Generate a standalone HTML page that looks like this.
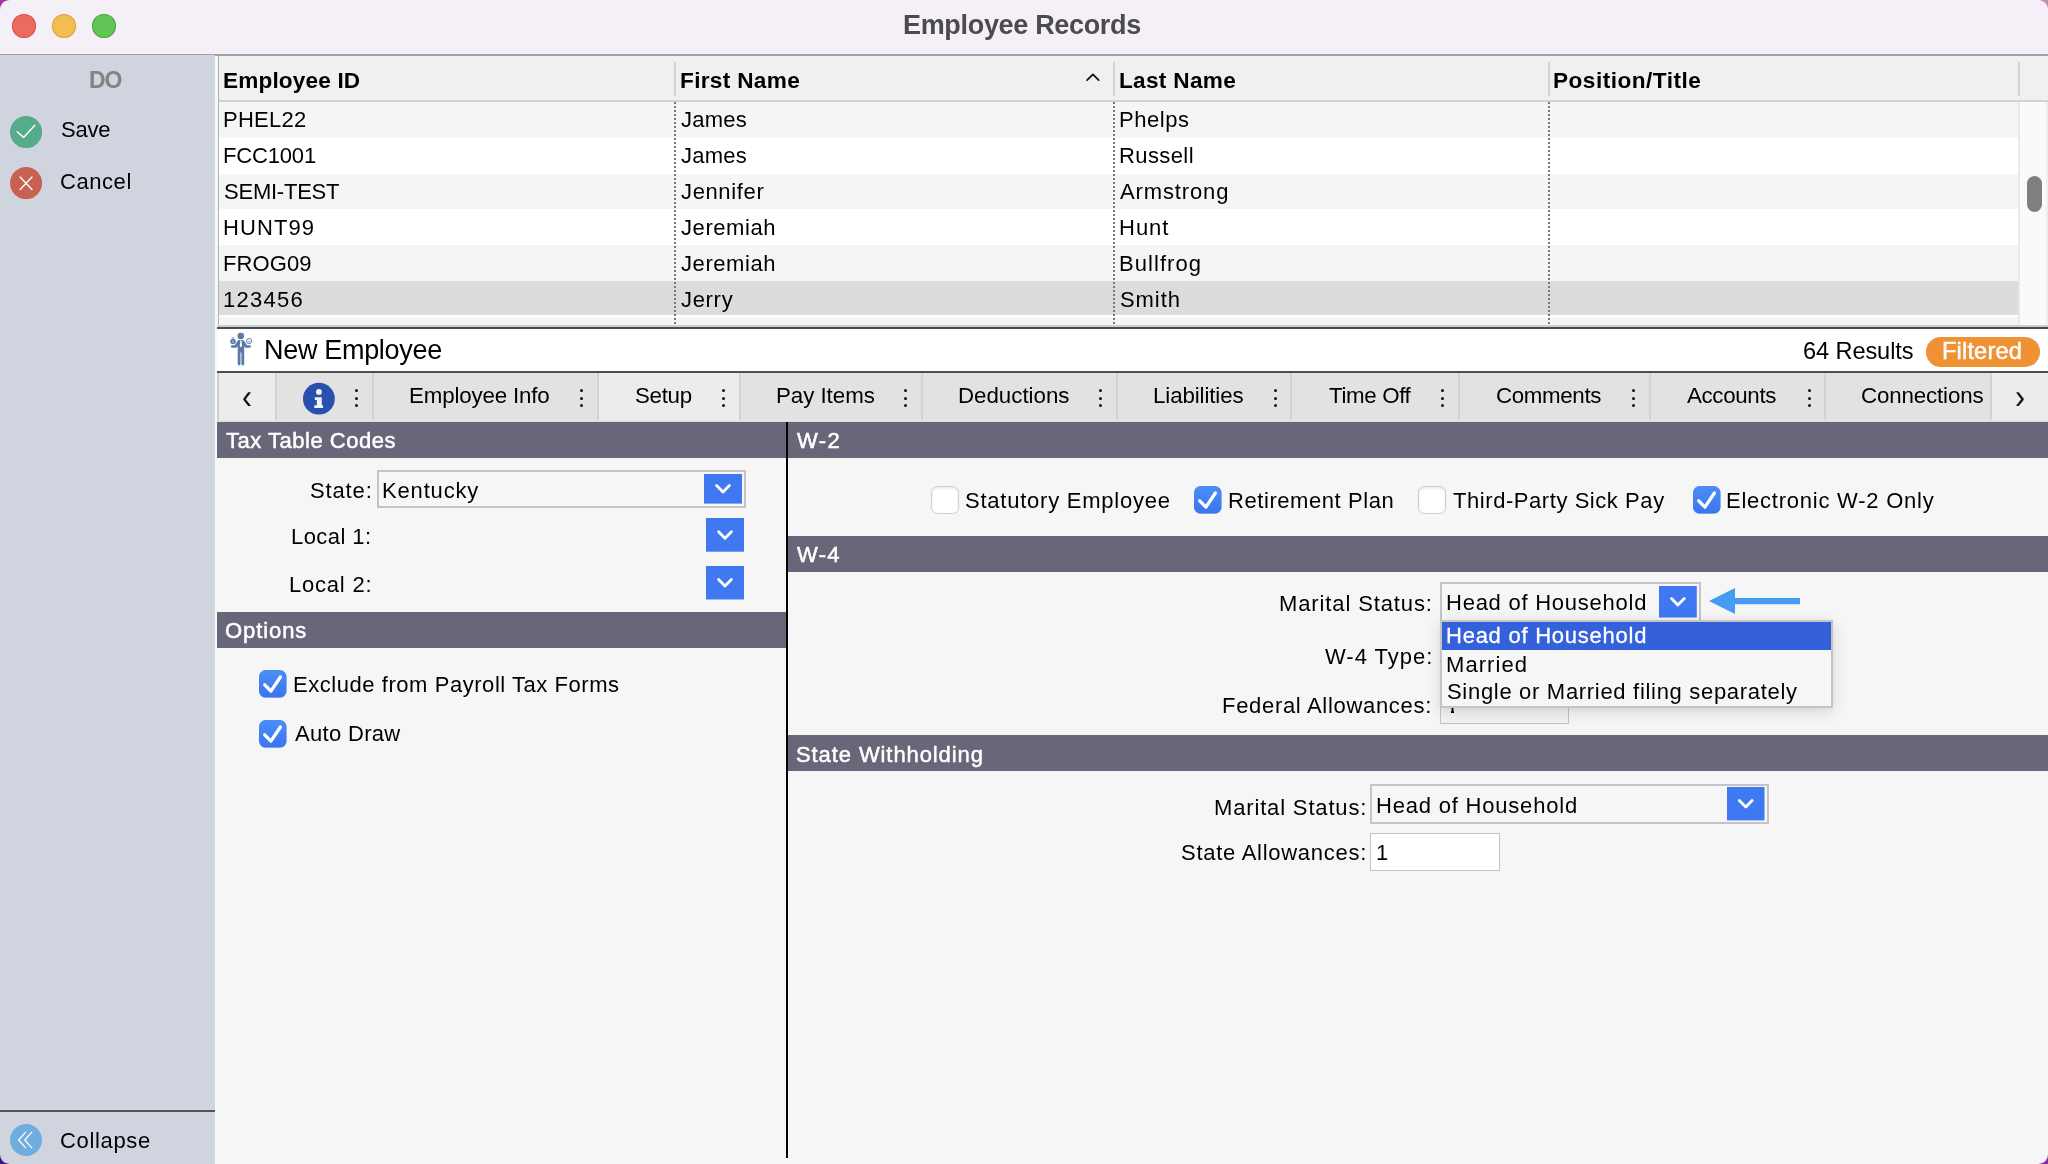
<!DOCTYPE html>
<html lang="en"><head><meta charset="utf-8"><title>Employee Records</title>
<style>
html,body{margin:0;padding:0;}
body{width:2048px;height:1164px;overflow:hidden;position:relative;background:#f6f6f6;font-family:"Liberation Sans",sans-serif;color:#000;}
.t{position:absolute;white-space:nowrap;line-height:1;will-change:transform;}
</style></head>
<body>
<div style="position:absolute;left:0px;top:0px;width:2048px;height:54px;background:#f5f0f7;"></div>
<div style="position:absolute;left:0px;top:54px;width:2048px;height:2px;background:#a1a1a3;"></div>
<div style="position:absolute;left:12px;top:13.8px;width:24px;height:24px;border-radius:50%;background:#ec6a5e;box-shadow:inset 0 0 0 1px #d8544a;"></div>
<div style="position:absolute;left:52px;top:13.8px;width:24px;height:24px;border-radius:50%;background:#f4be4f;box-shadow:inset 0 0 0 1px #dea33a;"></div>
<div style="position:absolute;left:92px;top:13.8px;width:24px;height:24px;border-radius:50%;background:#61c454;box-shadow:inset 0 0 0 1px #4eaa41;"></div>
<div class="t" style="left:902.89px;top:12px;font-size:27px;font-weight:bold;color:#4b4b4b;letter-spacing:-0.325px;">Employee Records</div>
<div style="position:absolute;left:0px;top:55px;width:214.9px;height:1109px;background:#d0d4de;"></div>
<div style="position:absolute;left:214.9px;top:56px;width:2.6px;height:1108px;background:#f8f8f9;"></div>
<div class="t" style="left:88.56px;top:69px;font-size:23px;font-weight:bold;color:#838383;letter-spacing:-0.996px;">DO</div>
<svg style="position:absolute;left:9.899999999999999px;top:115.6px" width="32.2" height="32.2" viewBox="0 0 32.2 32.2"><circle cx="16.1" cy="16.1" r="16.1" fill="#55ab8a"/><path d="M7.2 15.8 L13.6 21.4 L24.8 9.3" fill="none" stroke="#fff" stroke-width="1.45" stroke-linecap="round" stroke-linejoin="round"/></svg>
<svg style="position:absolute;left:9.899999999999999px;top:166.9px" width="32.2" height="32.2" viewBox="0 0 32.2 32.2"><circle cx="16.1" cy="16.1" r="16.1" fill="#c96152"/><path d="M10.1 10 L22 22.4 M22 10 L10.1 22.4" fill="none" stroke="#fff" stroke-width="1.4" stroke-linecap="round"/></svg>
<div class="t" style="left:60.50px;top:119px;font-size:22px;letter-spacing:-0.256px;">Save</div>
<div class="t" style="left:60.38px;top:171px;font-size:22px;letter-spacing:0.561px;">Cancel</div>
<div style="position:absolute;left:0px;top:1110px;width:215px;height:2px;background:#55565a;"></div>
<svg style="position:absolute;left:10px;top:1123.8px" width="32" height="32" viewBox="0 0 32 32"><circle cx="16" cy="16" r="16" fill="#70addf"/><path d="M15.6 8.2 L8.6 16 L15.6 23.8 M21.8 8.2 L14.8 16 L21.8 23.8" fill="none" stroke="#fff" stroke-width="1.25" stroke-linecap="round" stroke-linejoin="round"/></svg>
<div class="t" style="left:60.28px;top:1130px;font-size:22px;letter-spacing:0.656px;">Collapse</div>
<div style="position:absolute;left:217.5px;top:56px;width:1830.5px;height:45px;background:#f0f0f0;"></div>
<div style="position:absolute;left:217.5px;top:99.8px;width:1830.5px;height:2px;background:#d3d3d3;"></div>
<div style="position:absolute;left:217.5px;top:101.8px;width:1830.5px;height:226px;background:#ffffff;"></div>
<div style="position:absolute;left:218.0px;top:102.0px;width:1801.0px;height:35.8px;background:#f4f5f5;"></div>
<div style="position:absolute;left:218.0px;top:173.6px;width:1801.0px;height:35.8px;background:#f4f5f5;"></div>
<div style="position:absolute;left:218.0px;top:245.2px;width:1801.0px;height:35.8px;background:#f4f5f5;"></div>
<div style="position:absolute;left:218.0px;top:280.5px;width:1801.0px;height:34.3px;background:#dcdcdc;"></div>
<div style="position:absolute;left:218.0px;top:316.79999999999995px;width:1801.0px;height:9.200000000000045px;background:#f4f5f5;"></div>
<div style="position:absolute;left:217.5px;top:56px;width:1.6px;height:271px;background:#b2b2b2;"></div>
<div style="position:absolute;left:2018px;top:101.8px;width:30px;height:225px;background:#fafafa;"></div>
<div style="position:absolute;left:2018px;top:101.8px;width:2px;height:225px;background:#e9e9e9;"></div>
<div style="position:absolute;left:2046px;top:101.8px;width:2px;height:225px;background:#eeeeee;"></div>
<div style="position:absolute;left:2026.5px;top:176px;width:15px;height:35.5px;background:#7f7f7f;border-radius:7.5px;"></div>
<div style="position:absolute;left:674px;top:62.2px;width:2px;height:33.5px;background:#d4d4d4;"></div>
<div style="position:absolute;left:1112.75px;top:62.2px;width:2px;height:33.5px;background:#d4d4d4;"></div>
<div style="position:absolute;left:1547.5px;top:62.2px;width:2px;height:33.5px;background:#d4d4d4;"></div>
<div style="position:absolute;left:2018px;top:62.2px;width:2px;height:33.5px;background:#d4d4d4;"></div>
<div style="position:absolute;left:674px;top:102px;width:2px;height:222px;background:repeating-linear-gradient(to bottom,#787878 0,#787878 2px,transparent 2px,transparent 4px);"></div>
<div style="position:absolute;left:1112.75px;top:102px;width:2px;height:222px;background:repeating-linear-gradient(to bottom,#787878 0,#787878 2px,transparent 2px,transparent 4px);"></div>
<div style="position:absolute;left:1547.5px;top:102px;width:2px;height:222px;background:repeating-linear-gradient(to bottom,#787878 0,#787878 2px,transparent 2px,transparent 4px);"></div>
<div style="position:absolute;left:217.5px;top:325px;width:1830.5px;height:2px;background:#cdcdcd;"></div>
<div style="position:absolute;left:217px;top:327px;width:1831px;height:2px;background:#4d4d4e;"></div>
<div class="t" style="left:223.24px;top:70px;font-size:22.6px;font-weight:bold;letter-spacing:0.157px;">Employee ID</div>
<div class="t" style="left:680.24px;top:70px;font-size:22.6px;font-weight:bold;letter-spacing:0.331px;">First Name</div>
<div class="t" style="left:1118.99px;top:70px;font-size:22.6px;font-weight:bold;letter-spacing:0.310px;">Last Name</div>
<div class="t" style="left:1553.49px;top:70px;font-size:22.6px;font-weight:bold;letter-spacing:0.493px;">Position/Title</div>
<svg style="position:absolute;left:1084px;top:71px" width="18" height="14" viewBox="0 0 18 14"><path d="M3.1 9.1 L8.9 3.4 L14.7 9.1" fill="none" stroke="#111" stroke-width="1.8" stroke-linecap="round" stroke-linejoin="round"/></svg>
<div class="t" style="left:222.95px;top:109px;font-size:22px;letter-spacing:0.244px;">PHEL22</div>
<div class="t" style="left:681.41px;top:109px;font-size:22px;letter-spacing:0.210px;">James</div>
<div class="t" style="left:1118.70px;top:109px;font-size:22px;letter-spacing:0.566px;">Phelps</div>
<div class="t" style="left:222.95px;top:145px;font-size:22px;letter-spacing:-0.171px;">FCC1001</div>
<div class="t" style="left:681.41px;top:145px;font-size:22px;letter-spacing:0.210px;">James</div>
<div class="t" style="left:1118.70px;top:145px;font-size:22px;letter-spacing:0.399px;">Russell</div>
<div class="t" style="left:223.75px;top:181px;font-size:22px;letter-spacing:-0.229px;">SEMI-TEST</div>
<div class="t" style="left:681.41px;top:181px;font-size:22px;letter-spacing:0.634px;">Jennifer</div>
<div class="t" style="left:1120.46px;top:181px;font-size:22px;letter-spacing:0.874px;">Armstrong</div>
<div class="t" style="left:222.95px;top:217px;font-size:22px;letter-spacing:1.105px;">HUNT99</div>
<div class="t" style="left:681.41px;top:217px;font-size:22px;letter-spacing:0.577px;">Jeremiah</div>
<div class="t" style="left:1118.70px;top:217px;font-size:22px;letter-spacing:0.998px;">Hunt</div>
<div class="t" style="left:222.95px;top:253px;font-size:22px;letter-spacing:0.115px;">FROG09</div>
<div class="t" style="left:681.41px;top:253px;font-size:22px;letter-spacing:0.577px;">Jeremiah</div>
<div class="t" style="left:1118.70px;top:253px;font-size:22px;letter-spacing:1.054px;">Bullfrog</div>
<div class="t" style="left:223.07px;top:289px;font-size:22px;letter-spacing:1.246px;">123456</div>
<div class="t" style="left:681.41px;top:289px;font-size:22px;letter-spacing:0.687px;">Jerry</div>
<div class="t" style="left:1119.50px;top:289px;font-size:22px;letter-spacing:0.923px;">Smith</div>
<div style="position:absolute;left:217.0px;top:329px;width:1831.0px;height:42.2px;background:#ffffff;"></div>
<div style="position:absolute;left:217.0px;top:371px;width:1831.0px;height:2px;background:#4e4e50;"></div>
<div class="t" style="left:264.29px;top:337px;font-size:27px;letter-spacing:-0.310px;">New Employee</div>
<div class="t" style="left:1802.80px;top:340px;font-size:23.6px;letter-spacing:-0.106px;">64 Results</div>
<div style="position:absolute;left:1926px;top:337.1px;width:114.3px;height:29.8px;background:#ef9234;border-radius:14.9px;"></div>
<div class="t" style="left:1941.86px;top:340px;font-size:23.6px;color:#fff;letter-spacing:0.166px;-webkit-text-stroke:0.45px #fff;">Filtered</div>
<svg style="position:absolute;left:228px;top:330px" width="26" height="38" viewBox="228 330 26 38">
<g fill="#5a7baa" stroke="none">
<circle cx="240.8" cy="336.1" r="3.3"/>
<path d="M238.9 340.1 L242.8 340.1 C244.6 340.6 245.6 343.6 247 345.2 L249.7 345.2 A1.25 1.25 0 0 1 249.7 347.7 L246 347.7 C245.2 347.7 244.6 347 244.2 346.2 L244.2 364 A1.4 1.4 0 0 1 241.4 364 L241.4 352.4 L240.5 352.4 L240.5 364 A1.4 1.4 0 0 1 237.7 364 L237.7 346.2 C237.3 347 236.6 347.7 235.8 347.7 L232.1 347.7 A1.25 1.25 0 0 1 232.1 345.2 L234.8 345.2 C236.2 343.6 237.1 340.6 238.9 340.1 Z"/>
<circle cx="233" cy="341.5" r="2.75"/>
<path d="M231.3 337 L233 338.9 L234.8 337 L234.4 336.7 L233 338 L231.7 336.7 Z"/>
</g>
<path d="M240.3 340.2 L241.5 340.2 L242 346 L240.9 347.4 L239.8 346 Z" fill="#f4f6fa"/>
<rect x="232.4" y="340.2" width="1.2" height="2.6" fill="#a9bcd8"/>
<circle cx="249.1" cy="341.1" r="2.6" fill="#f2f5fa" stroke="#5a7baa" stroke-width="0.9"/>
<path d="M247.9 341.2 Q249.1 342.7 250.4 341.2" fill="none" stroke="#5a7baa" stroke-width="0.7"/>
</svg>
<div style="position:absolute;left:217.0px;top:373px;width:1831.0px;height:49px;background:#e2e2e2;"></div>
<div style="position:absolute;left:217.0px;top:373px;width:58.5px;height:49px;background:#ececec;"></div>
<div style="position:absolute;left:598px;top:373px;width:142px;height:49px;background:#ececec;"></div>
<div style="position:absolute;left:1991.5px;top:373px;width:56.5px;height:49px;background:#ececec;"></div>
<div style="position:absolute;left:274.5px;top:373px;width:2px;height:48px;background:#d3d3d3;"></div>
<div style="position:absolute;left:371.5px;top:373px;width:2px;height:48px;background:#d3d3d3;"></div>
<div style="position:absolute;left:597px;top:373px;width:2px;height:48px;background:#d3d3d3;"></div>
<div style="position:absolute;left:739px;top:373px;width:2px;height:48px;background:#d3d3d3;"></div>
<div style="position:absolute;left:921.3px;top:373px;width:2px;height:48px;background:#d3d3d3;"></div>
<div style="position:absolute;left:1116px;top:373px;width:2px;height:48px;background:#d3d3d3;"></div>
<div style="position:absolute;left:1290px;top:373px;width:2px;height:48px;background:#d3d3d3;"></div>
<div style="position:absolute;left:1458px;top:373px;width:2px;height:48px;background:#d3d3d3;"></div>
<div style="position:absolute;left:1649px;top:373px;width:2px;height:48px;background:#d3d3d3;"></div>
<div style="position:absolute;left:1824px;top:373px;width:2px;height:48px;background:#d3d3d3;"></div>
<div style="position:absolute;left:1990.3px;top:373px;width:2px;height:48px;background:#d3d3d3;"></div>
<div style="position:absolute;left:217.0px;top:420.2px;width:1831.0px;height:2px;background:linear-gradient(to bottom,#ececec,#d6d6d9);"></div>
<div style="position:absolute;left:217.0px;top:373px;width:1.8px;height:48px;background:#cdcdcd;"></div>
<div style="position:absolute;left:354.90px;top:389.10px;width:3.2px;height:3.2px;border-radius:50%;background:#111;"></div>
<div style="position:absolute;left:354.90px;top:396.50px;width:3.2px;height:3.2px;border-radius:50%;background:#111;"></div>
<div style="position:absolute;left:354.90px;top:403.80px;width:3.2px;height:3.2px;border-radius:50%;background:#111;"></div>
<div class="t" style="left:409.42px;top:385px;font-size:22.3px;letter-spacing:-0.149px;">Employee Info</div>
<div style="position:absolute;left:579.90px;top:389.10px;width:3.2px;height:3.2px;border-radius:50%;background:#111;"></div>
<div style="position:absolute;left:579.90px;top:396.50px;width:3.2px;height:3.2px;border-radius:50%;background:#111;"></div>
<div style="position:absolute;left:579.90px;top:403.80px;width:3.2px;height:3.2px;border-radius:50%;background:#111;"></div>
<div class="t" style="left:635.09px;top:385px;font-size:22.3px;letter-spacing:-0.282px;">Setup</div>
<div style="position:absolute;left:721.90px;top:389.10px;width:3.2px;height:3.2px;border-radius:50%;background:#111;"></div>
<div style="position:absolute;left:721.90px;top:396.50px;width:3.2px;height:3.2px;border-radius:50%;background:#111;"></div>
<div style="position:absolute;left:721.90px;top:403.80px;width:3.2px;height:3.2px;border-radius:50%;background:#111;"></div>
<div class="t" style="left:776.07px;top:385px;font-size:22.3px;letter-spacing:-0.038px;">Pay Items</div>
<div style="position:absolute;left:903.90px;top:389.10px;width:3.2px;height:3.2px;border-radius:50%;background:#111;"></div>
<div style="position:absolute;left:903.90px;top:396.50px;width:3.2px;height:3.2px;border-radius:50%;background:#111;"></div>
<div style="position:absolute;left:903.90px;top:403.80px;width:3.2px;height:3.2px;border-radius:50%;background:#111;"></div>
<div class="t" style="left:957.67px;top:385px;font-size:22.3px;letter-spacing:-0.014px;">Deductions</div>
<div style="position:absolute;left:1098.90px;top:389.10px;width:3.2px;height:3.2px;border-radius:50%;background:#111;"></div>
<div style="position:absolute;left:1098.90px;top:396.50px;width:3.2px;height:3.2px;border-radius:50%;background:#111;"></div>
<div style="position:absolute;left:1098.90px;top:403.80px;width:3.2px;height:3.2px;border-radius:50%;background:#111;"></div>
<div class="t" style="left:1152.87px;top:385px;font-size:22.3px;letter-spacing:-0.109px;">Liabilities</div>
<div style="position:absolute;left:1273.90px;top:389.10px;width:3.2px;height:3.2px;border-radius:50%;background:#111;"></div>
<div style="position:absolute;left:1273.90px;top:396.50px;width:3.2px;height:3.2px;border-radius:50%;background:#111;"></div>
<div style="position:absolute;left:1273.90px;top:403.80px;width:3.2px;height:3.2px;border-radius:50%;background:#111;"></div>
<div class="t" style="left:1329.40px;top:385px;font-size:22.3px;letter-spacing:-0.355px;">Time Off</div>
<div style="position:absolute;left:1440.90px;top:389.10px;width:3.2px;height:3.2px;border-radius:50%;background:#111;"></div>
<div style="position:absolute;left:1440.90px;top:396.50px;width:3.2px;height:3.2px;border-radius:50%;background:#111;"></div>
<div style="position:absolute;left:1440.90px;top:403.80px;width:3.2px;height:3.2px;border-radius:50%;background:#111;"></div>
<div class="t" style="left:1496.37px;top:385px;font-size:22.3px;letter-spacing:-0.339px;">Comments</div>
<div style="position:absolute;left:1631.90px;top:389.10px;width:3.2px;height:3.2px;border-radius:50%;background:#111;"></div>
<div style="position:absolute;left:1631.90px;top:396.50px;width:3.2px;height:3.2px;border-radius:50%;background:#111;"></div>
<div style="position:absolute;left:1631.90px;top:403.80px;width:3.2px;height:3.2px;border-radius:50%;background:#111;"></div>
<div class="t" style="left:1687.46px;top:385px;font-size:22.3px;letter-spacing:-0.325px;">Accounts</div>
<div style="position:absolute;left:1807.90px;top:389.10px;width:3.2px;height:3.2px;border-radius:50%;background:#111;"></div>
<div style="position:absolute;left:1807.90px;top:396.50px;width:3.2px;height:3.2px;border-radius:50%;background:#111;"></div>
<div style="position:absolute;left:1807.90px;top:403.80px;width:3.2px;height:3.2px;border-radius:50%;background:#111;"></div>
<div class="t" style="left:1861.47px;top:385px;font-size:22.3px;letter-spacing:-0.133px;">Connections</div>
<div class="t" style="left:241.70px;top:378px;font-size:35px;color:#0a0a0a;transform:scaleX(0.85);transform-origin:0 0;">‹</div>
<div class="t" style="left:2015.08px;top:378px;font-size:35px;color:#0a0a0a;transform:scaleX(0.85);transform-origin:0 0;">›</div>
<svg style="position:absolute;left:302px;top:382px" width="34" height="34" viewBox="302 382 34 34"><circle cx="318.9" cy="398.7" r="15.9" fill="#2850ae"/>
<circle cx="318.9" cy="391.9" r="2.9" fill="#f4f4f6"/><path d="M314.8 397.3 L321.8 397.3 L321.8 405.3 L323.1 405.3 L323.1 408.1 L314.3 408.1 L314.3 405.3 L316.8 405.3 L316.8 399.9 L314.8 399.9 Z" fill="#f4f4f6"/></svg>
<div style="position:absolute;left:217.0px;top:422px;width:1831.0px;height:742px;background:#f6f6f6;"></div>
<div style="position:absolute;left:786px;top:422px;width:2px;height:736px;background:#000;"></div>
<div style="position:absolute;left:217px;top:422.2px;width:569px;height:35.7px;background:#686679;"></div>
<div class="t" style="left:226.26px;top:430px;font-size:22px;color:#fff;letter-spacing:0.521px;-webkit-text-stroke:0.5px #fff;">Tax Table Codes</div>
<div style="position:absolute;left:217px;top:612px;width:569px;height:35.7px;background:#686679;"></div>
<div class="t" style="left:225.21px;top:620px;font-size:22px;color:#fff;letter-spacing:0.920px;-webkit-text-stroke:0.5px #fff;">Options</div>
<div style="position:absolute;left:788px;top:422.2px;width:1260px;height:35.7px;background:#686679;"></div>
<div class="t" style="left:796.90px;top:430px;font-size:22px;color:#fff;letter-spacing:1.387px;-webkit-text-stroke:0.5px #fff;">W-2</div>
<div style="position:absolute;left:788px;top:536.2px;width:1260px;height:35.7px;background:#686679;"></div>
<div class="t" style="left:796.90px;top:544px;font-size:22px;color:#fff;letter-spacing:1.306px;-webkit-text-stroke:0.5px #fff;">W-4</div>
<div style="position:absolute;left:788px;top:735.4px;width:1260px;height:35.7px;background:#686679;"></div>
<div class="t" style="left:796.00px;top:744px;font-size:22px;color:#fff;letter-spacing:0.905px;-webkit-text-stroke:0.5px #fff;">State Withholding</div>
<div class="t" style="left:309.50px;top:480px;font-size:22px;letter-spacing:0.855px;">State:</div>
<div style="position:absolute;left:377.1px;top:470.2px;width:368.6px;height:37.6px;background:transparent;box-sizing:border-box;border:2px solid #c4c4c4;"></div>
<div class="t" style="left:382.45px;top:480px;font-size:22px;letter-spacing:0.836px;">Kentucky</div>
<svg style="position:absolute;left:704px;top:474.2px" width="38" height="29.6" viewBox="0 0 38 29.6"><rect width="38" height="29.6" fill="#4078f2"/><path d="M12.6 11.6 L19.0 18.1 L25.4 11.6" fill="none" stroke="#fff" stroke-width="2.8" stroke-linecap="round" stroke-linejoin="round"/></svg>
<div class="t" style="left:290.70px;top:526px;font-size:22px;letter-spacing:0.430px;">Local 1:</div>
<svg style="position:absolute;left:706px;top:518.2px" width="38" height="33.7" viewBox="0 0 38 33.7"><rect width="38" height="33.7" fill="#4078f2"/><path d="M12.6 13.7 L19.0 20.2 L25.4 13.7" fill="none" stroke="#fff" stroke-width="2.8" stroke-linecap="round" stroke-linejoin="round"/></svg>
<div class="t" style="left:288.70px;top:574px;font-size:22px;letter-spacing:0.787px;">Local 2:</div>
<svg style="position:absolute;left:706px;top:566.2px" width="38" height="33.5" viewBox="0 0 38 33.5"><rect width="38" height="33.5" fill="#4078f2"/><path d="M12.6 13.6 L19.0 20.1 L25.4 13.6" fill="none" stroke="#fff" stroke-width="2.8" stroke-linecap="round" stroke-linejoin="round"/></svg>
<svg style="position:absolute;left:257.85px;top:669px" width="29.5" height="30.5" viewBox="-1 -1 29.5 30.5"><defs><linearGradient id="g259670" x1="0" y1="0" x2="0" y2="1"><stop offset="0" stop-color="#4a8ef7"/><stop offset="1" stop-color="#3b74f0"/></linearGradient></defs><rect x="0" y="0.6" width="27.5" height="27.5" rx="6.5" fill="#2a5fd0" opacity="0.25"/><rect x="0" y="0" width="27.5" height="27.5" rx="6.5" fill="url(#g259670)"/><path d="M5.7 14.8 L11.9 21.1 L21.4 7" fill="none" stroke="#fff" stroke-width="3.3" stroke-linecap="round" stroke-linejoin="round"/></svg>
<div class="t" style="left:292.95px;top:674px;font-size:22px;letter-spacing:0.551px;">Exclude from Payroll Tax Forms</div>
<svg style="position:absolute;left:257.85px;top:718.5px" width="29.5" height="30.5" viewBox="-1 -1 29.5 30.5"><defs><linearGradient id="g259719" x1="0" y1="0" x2="0" y2="1"><stop offset="0" stop-color="#4a8ef7"/><stop offset="1" stop-color="#3b74f0"/></linearGradient></defs><rect x="0" y="0.6" width="27.5" height="27.5" rx="6.5" fill="#2a5fd0" opacity="0.25"/><rect x="0" y="0" width="27.5" height="27.5" rx="6.5" fill="url(#g259719)"/><path d="M5.7 14.8 L11.9 21.1 L21.4 7" fill="none" stroke="#fff" stroke-width="3.3" stroke-linecap="round" stroke-linejoin="round"/></svg>
<div class="t" style="left:294.71px;top:723px;font-size:22px;letter-spacing:0.317px;">Auto Draw</div>
<div style="position:absolute;left:931.25px;top:486.25px;width:27.5px;height:27.5px;box-sizing:border-box;border-radius:6.5px;background:#fff;border:1px solid #cdcdcd;box-shadow:inset 0 1.5px 2px rgba(0,0,0,0.09);"></div>
<div class="t" style="left:965.25px;top:490px;font-size:22px;letter-spacing:0.764px;">Statutory Employee</div>
<svg style="position:absolute;left:1193.1px;top:485.25px" width="29.5" height="30.5" viewBox="-1 -1 29.5 30.5"><defs><linearGradient id="g1194486" x1="0" y1="0" x2="0" y2="1"><stop offset="0" stop-color="#4a8ef7"/><stop offset="1" stop-color="#3b74f0"/></linearGradient></defs><rect x="0" y="0.6" width="27.5" height="27.5" rx="6.5" fill="#2a5fd0" opacity="0.25"/><rect x="0" y="0" width="27.5" height="27.5" rx="6.5" fill="url(#g1194486)"/><path d="M5.7 14.8 L11.9 21.1 L21.4 7" fill="none" stroke="#fff" stroke-width="3.3" stroke-linecap="round" stroke-linejoin="round"/></svg>
<div class="t" style="left:1228.20px;top:490px;font-size:22px;letter-spacing:0.571px;">Retirement Plan</div>
<div style="position:absolute;left:1418.3px;top:486.25px;width:27.5px;height:27.5px;box-sizing:border-box;border-radius:6.5px;background:#fff;border:1px solid #cdcdcd;box-shadow:inset 0 1.5px 2px rgba(0,0,0,0.09);"></div>
<div class="t" style="left:1453.31px;top:490px;font-size:22px;letter-spacing:0.560px;">Third-Party Sick Pay</div>
<svg style="position:absolute;left:1691.6999999999998px;top:485.25px" width="29.5" height="30.5" viewBox="-1 -1 29.5 30.5"><defs><linearGradient id="g1693486" x1="0" y1="0" x2="0" y2="1"><stop offset="0" stop-color="#4a8ef7"/><stop offset="1" stop-color="#3b74f0"/></linearGradient></defs><rect x="0" y="0.6" width="27.5" height="27.5" rx="6.5" fill="#2a5fd0" opacity="0.25"/><rect x="0" y="0" width="27.5" height="27.5" rx="6.5" fill="url(#g1693486)"/><path d="M5.7 14.8 L11.9 21.1 L21.4 7" fill="none" stroke="#fff" stroke-width="3.3" stroke-linecap="round" stroke-linejoin="round"/></svg>
<div class="t" style="left:1726.30px;top:490px;font-size:22px;letter-spacing:0.765px;">Electronic W-2 Only</div>
<div class="t" style="left:1279.45px;top:593px;font-size:22px;letter-spacing:0.876px;">Marital Status:</div>
<div class="t" style="left:1325.40px;top:646px;font-size:22px;letter-spacing:0.994px;">W-4 Type:</div>
<div class="t" style="left:1221.95px;top:695px;font-size:22px;letter-spacing:0.688px;">Federal Allowances:</div>
<div style="position:absolute;left:1440.1px;top:582.2px;width:260.7px;height:39.5px;background:transparent;box-sizing:border-box;border:2px solid #c4c4c4;"></div>
<div class="t" style="left:1445.70px;top:592px;font-size:22px;letter-spacing:0.754px;">Head of Household</div>
<svg style="position:absolute;left:1659.2px;top:586.2px" width="37.8" height="31.5" viewBox="0 0 37.8 31.5"><rect width="37.8" height="31.5" fill="#4078f2"/><path d="M12.5 12.6 L18.9 19.1 L25.3 12.6" fill="none" stroke="#fff" stroke-width="2.8" stroke-linecap="round" stroke-linejoin="round"/></svg>
<div style="position:absolute;left:1440.2px;top:687px;width:128.5px;height:36.6px;background:#f3f3f3;box-sizing:border-box;border:1.2px solid #c2c2c2;"></div>
<div style="position:absolute;left:1450.9px;top:690px;width:2.9px;height:32px;overflow:hidden;"><div class="t" style="left:-5.1px;top:5px;font-size:22px;">1</div></div>
<svg style="position:absolute;left:1706px;top:586px" width="98" height="30" viewBox="0 0 98 30"><path d="M3 15.1 L29 2.1 L29 12 L94 12 L94 18.2 L29 18.2 L29 28.1 Z" fill="#459cf2"/></svg>
<div style="position:absolute;left:1439.8px;top:619.8px;width:393.2px;height:88.6px;box-sizing:border-box;background:#f6f6f6;border:2px solid #c4c4c4;box-shadow:0 4px 15px rgba(0,0,0,0.13),0 1px 4px rgba(0,0,0,0.05);"></div>
<div style="position:absolute;left:1441.8px;top:621.9px;width:389.2px;height:27.9px;background:#3461d9;"></div>
<div class="t" style="left:1445.70px;top:625px;font-size:22px;color:#fff;letter-spacing:0.754px;-webkit-text-stroke:0.3px #fff;">Head of Household</div>
<div class="t" style="left:1445.70px;top:654px;font-size:22px;letter-spacing:1.058px;">Married</div>
<div class="t" style="left:1446.50px;top:681px;font-size:22px;letter-spacing:0.693px;">Single or Married filing separately</div>
<div class="t" style="left:1214.00px;top:797px;font-size:22px;letter-spacing:0.843px;">Marital Status:</div>
<div style="position:absolute;left:1370px;top:783.6px;width:398.8px;height:40.9px;background:transparent;box-sizing:border-box;border:2px solid #c4c4c4;"></div>
<div class="t" style="left:1375.60px;top:795px;font-size:22px;letter-spacing:0.798px;">Head of Household</div>
<svg style="position:absolute;left:1727.2px;top:787.2px" width="37.5" height="33.4" viewBox="0 0 37.5 33.4"><rect width="37.5" height="33.4" fill="#4078f2"/><path d="M12.3 13.5 L18.8 20.0 L25.1 13.5" fill="none" stroke="#fff" stroke-width="2.8" stroke-linecap="round" stroke-linejoin="round"/></svg>
<div class="t" style="left:1181.10px;top:842px;font-size:22px;letter-spacing:0.728px;">State Allowances:</div>
<div style="position:absolute;left:1370px;top:833.1px;width:129.7px;height:37.5px;background:#fff;box-sizing:border-box;border:1.5px solid #c3c3c3;"></div>
<div class="t" style="left:1375.72px;top:842px;font-size:22px;">1</div>
<svg style="position:absolute;left:0;top:0" width="2048" height="1164" viewBox="0 0 2048 1164" pointer-events="none">
<path d="M0 0 H9.5 A9.5 9.5 0 0 0 0 9.5 Z" fill="#9d38a4"/>
<path d="M2048 0 H2038.5 A9.5 9.5 0 0 1 2048 9.5 Z" fill="#c58bb3"/>
<path d="M0 1164 H9.5 A9.5 9.5 0 0 1 0 1154.5 Z" fill="#3a1789"/>
<path d="M2048 1164 H2038.5 A9.5 9.5 0 0 0 2048 1154.5 Z" fill="#8a2aa8"/>
</svg>
</body></html>
